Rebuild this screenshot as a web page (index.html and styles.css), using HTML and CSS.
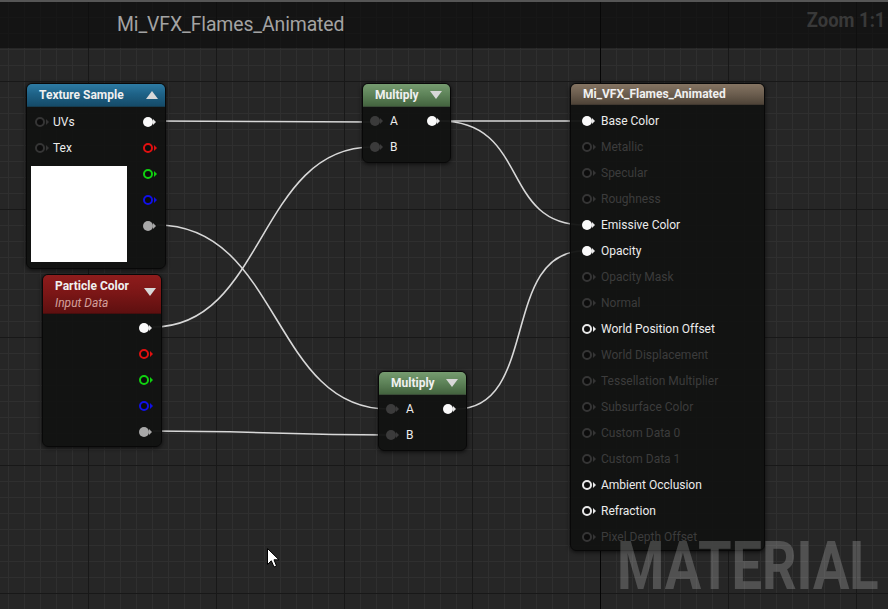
FILE: index.html
```html
<!DOCTYPE html>
<html>
<head>
<meta charset="utf-8">
<link rel="stylesheet" href="styles.css">
</head>
<body>
<div class="graph">
  <header class="topbar">
    <span class="title">Mi_VFX_Flames_Animated</span>
    <span class="zoom">Zoom 1:1</span>
  </header>

  <svg class="wires" width="888" height="609" viewBox="0 0 888 609">
    <g fill="none" stroke="#d8d8d8" stroke-width="1.6">
      <path d="M157,121 C260,121 268,122 372,122"/>
      <path d="M157,225 C280,225 272,409 388,409"/>
      <path d="M153,327 C265,327 258,147 372,147"/>
      <path d="M153,431 C265,431 280,435 388,435"/>
      <path d="M440,121 C510,121 512,121 584,121"/>
      <path d="M440,121 C530,121 500,225 584,225"/>
      <path d="M456,409 C540,409 500,251 584,251"/>
    </g>
  </svg>

  <div class="node tex">
    <div class="head head-blue"><span class="htitle">Texture Sample</span><span class="tri up"></span></div>
    <div class="tex-body">
      <div class="tex-left">
        <div class="row in"><span class="pin dimring"></span><span class="lbl">UVs</span></div>
        <div class="row in"><span class="pin dimring"></span><span class="lbl">Tex</span></div>
        <div class="preview"></div>
      </div>
      <div class="tex-right">
        <div class="row out"><span class="pin white"></span></div>
        <div class="row out"><span class="pin ring red"></span></div>
        <div class="row out"><span class="pin ring green"></span></div>
        <div class="row out"><span class="pin ring blue"></span></div>
        <div class="row out"><span class="pin grey"></span></div>
      </div>
    </div>
  </div>

  <div class="node pcolor">
    <div class="head head-red">
      <div class="htext">
        <span class="htitle">Particle Color</span>
        <span class="hsub">Input Data</span>
      </div>
      <span class="tri down"></span>
    </div>
    <div class="pc-body">
      <div class="row out"><span class="pin white"></span></div>
      <div class="row out"><span class="pin ring red"></span></div>
      <div class="row out"><span class="pin ring green"></span></div>
      <div class="row out"><span class="pin ring blue"></span></div>
      <div class="row out"><span class="pin grey"></span></div>
    </div>
  </div>

  <div class="node mul mul1">
    <div class="head head-green"><span class="htitle">Multiply</span><span class="tri down"></span></div>
    <div class="mul-body">
      <div class="mul-left">
        <div class="row in"><span class="pin dimfill"></span><span class="lbl">A</span></div>
        <div class="row in"><span class="pin dimfill"></span><span class="lbl">B</span></div>
      </div>
      <div class="mul-right">
        <div class="row out"><span class="pin white"></span></div>
      </div>
    </div>
  </div>

  <div class="node mul mul2">
    <div class="head head-green"><span class="htitle">Multiply</span><span class="tri down"></span></div>
    <div class="mul-body">
      <div class="mul-left">
        <div class="row in"><span class="pin dimfill"></span><span class="lbl">A</span></div>
        <div class="row in"><span class="pin dimfill"></span><span class="lbl">B</span></div>
      </div>
      <div class="mul-right">
        <div class="row out"><span class="pin white"></span></div>
      </div>
    </div>
  </div>

  <div class="node mat">
    <div class="head head-brown"><span class="htitle">Mi_VFX_Flames_Animated</span></div>
    <div class="mat-body">
      <div class="row in"><span class="pin white"></span><span class="lbl">Base Color</span></div>
      <div class="row in off"><span class="pin dimring"></span><span class="lbl">Metallic</span></div>
      <div class="row in off"><span class="pin dimring"></span><span class="lbl">Specular</span></div>
      <div class="row in off"><span class="pin dimring"></span><span class="lbl">Roughness</span></div>
      <div class="row in"><span class="pin white"></span><span class="lbl">Emissive Color</span></div>
      <div class="row in"><span class="pin white"></span><span class="lbl">Opacity</span></div>
      <div class="row in off"><span class="pin dimring"></span><span class="lbl">Opacity Mask</span></div>
      <div class="row in off"><span class="pin dimring"></span><span class="lbl">Normal</span></div>
      <div class="row in"><span class="pin ring whitering"></span><span class="lbl">World Position Offset</span></div>
      <div class="row in off"><span class="pin dimring"></span><span class="lbl">World Displacement</span></div>
      <div class="row in off"><span class="pin dimring"></span><span class="lbl">Tessellation Multiplier</span></div>
      <div class="row in off"><span class="pin dimring"></span><span class="lbl">Subsurface Color</span></div>
      <div class="row in off"><span class="pin dimring"></span><span class="lbl">Custom Data 0</span></div>
      <div class="row in off"><span class="pin dimring"></span><span class="lbl">Custom Data 1</span></div>
      <div class="row in"><span class="pin ring whitering"></span><span class="lbl">Ambient Occlusion</span></div>
      <div class="row in"><span class="pin ring whitering"></span><span class="lbl">Refraction</span></div>
      <div class="row in off"><span class="pin dimring"></span><span class="lbl">Pixel Depth Offset</span></div>
    </div>
  </div>

  <div class="watermark">MATERIAL</div>

  <svg class="cursor" width="14" height="22" viewBox="0 0 14 22">
    <path d="M0.5,0.5 L0.5,16.5 L4.3,12.8 L7,19 L9.5,18 L7,11.8 L12,11.8 Z" fill="#fff" stroke="#000" stroke-width="1"/>
  </svg>
</div>
</body>
</html>
```

FILE: styles.css
```css
* { box-sizing: border-box; }
html, body { margin: 0; padding: 0; }
body {
  width: 888px;
  height: 609px;
  overflow: hidden;
  font-family: Roboto, "Noto Sans", sans-serif;
  background: #262626;
}
.graph {
  position: relative;
  width: 888px;
  height: 609px;
  overflow: hidden;
  background-color: #262626;
  background-image:
    linear-gradient(to right, transparent 600px, #050505 600px, #050505 601px, transparent 601px),
    linear-gradient(to right, #181818 1px, transparent 1px),
    linear-gradient(to bottom, #181818 1px, transparent 1px),
    linear-gradient(to right, #2f2f2f 1px, transparent 1px),
    linear-gradient(to bottom, #2f2f2f 1px, transparent 1px);
  background-size: 888px 609px, 128px 128px, 128px 128px, 16px 16px, 16px 16px;
  background-position: 0 0, 88px 0, 0 81px, 8px 0, 0 1px;
  background-repeat: no-repeat, repeat, repeat, repeat, repeat;
}
.topbar {
  height: 48px;
  border-top: 2px solid #565656;
  background: rgba(10, 10, 10, 0.62);
  display: flex;
  align-items: center;
  justify-content: space-between;
  padding: 0 0 2px 117px;
  position: relative;
  z-index: 3;
}
.title {
  font-size: 19.4px;
  color: #a3a3a3;
  letter-spacing: -0.1px;
}
.zoom {
  font-size: 20px;
  font-weight: bold;
  color: #393939;
  margin-right: 3px;
  margin-top: -8px;
  transform: scaleX(0.92);
  transform-origin: right center;
}
.wires {
  position: absolute;
  left: 0;
  top: 0;
  z-index: 1;
}
.node {
  position: absolute;
  z-index: 2;
  background: rgba(18, 19, 18, 0.96);
  border: 1px solid #080808;
  border-radius: 6px;
  box-shadow: 0 1px 4px rgba(0, 0, 0, 0.7);
  overflow: hidden;
  color: #ececec;
  font-size: 12px;
}
.head {
  display: flex;
  align-items: center;
  justify-content: space-between;
  height: 23px;
  padding: 0 7px 0 12px;
  border-bottom: 1px solid rgba(0,0,0,0.5);
}
.htitle {
  font-weight: bold;
  font-size: 12px;
  color: #f0f0f0;
  white-space: nowrap;
}
.head-blue { background: linear-gradient(to bottom, #2d7ba3 0%, #1e6287 45%, #154b69 100%); }
.head-red { background: linear-gradient(to bottom, #8e1c1c 0%, #7a1616 50%, #5e1010 100%); height: 39px; align-items: flex-start; padding-top: 3px; }
.head-green { background: linear-gradient(to bottom, #769c70 0%, #5d8258 50%, #44643f 100%); }
.head-brown { background: linear-gradient(to bottom, #857462 0%, #6c5e4f 50%, #4f4438 100%); height: 21px; }
.htext { display: flex; flex-direction: column; line-height: 17px; }
.hsub { font-style: italic; color: #d4a09c; font-size: 12px; }
.tri { width: 0; height: 0; border-left: 6px solid transparent; border-right: 6px solid transparent; }
.tri.up { border-bottom: 8px solid #d8d8d8; }
.tri.down { border-top: 8px solid #d8d8d8; }
.head-red .tri { margin-top: 10px; }

.row {
  height: 26px;
  display: flex;
  align-items: center;
  white-space: nowrap;
}
.row.out { justify-content: flex-end; }
.lbl { color: #ececec; font-size: 12px; }
.off .lbl { color: #3c3c3c; }

/* pins */
.pin {
  position: relative;
  width: 10px;
  height: 10px;
  border-radius: 50%;
  flex: none;
}
.pin::after {
  content: "";
  position: absolute;
  top: 50%;
  margin-top: -3px;
  left: 10px;
  border-top: 3px solid transparent;
  border-bottom: 3px solid transparent;
  border-left: 3px solid #bdbdbd;
}
.pin.white { background: #fafafa; }
.pin.white::after { border-left-color: #e8e8e8; }
.pin.grey { background: #a8a8a8; }
.pin.grey::after { border-left-color: #a8a8a8; }
.pin.ring { border: 2px solid; background: #0c0c0c; }
.pin.ring::after { left: 9px; }
.pin.red { border-color: #e01010; }
.pin.red::after { border-left-color: #e01010; }
.pin.green { border-color: #10d010; }
.pin.green::after { border-left-color: #10d010; }
.pin.blue { border-color: #1010e8; }
.pin.blue::after { border-left-color: #1010e8; }
.pin.whitering { border-color: #e8e8e8; }
.pin.whitering::after { border-left-color: #e8e8e8; }
.pin.dimring { border: 2px solid #353535; background: #0c0c0c; }
.pin.dimring::after { left: 9px; border-left-color: #353535; }
.pin.dimfill { background: #3b3b3b; }
.pin.dimfill::after { border-left-color: #3b3b3b; }

/* texture sample */
.tex { left: 26px; top: 83px; width: 140px; height: 186px; }
.tex-body { display: flex; justify-content: space-between; padding-top: 2px; }
.tex-left { display: flex; flex-direction: column; }
.tex-left .row { padding-left: 8px; }
.tex-left .lbl { margin-left: 8px; }
.preview { width: 96px; height: 96px; background: #fff; margin: 5px 0 0 4px; }
.tex-right { display: flex; flex-direction: column; padding-right: 12px; }

/* particle color */
.pcolor { left: 42px; top: 274px; width: 120px; height: 173px; }
.pcolor .head { padding-left: 12px; padding-right: 5px; }
.pc-body { display: flex; flex-direction: column; padding: 1px 12px 0 0; }

/* multiply */
.mul { width: 89px; height: 80px; }
.mul1 { left: 362px; top: 83px; }
.mul2 { left: 378px; top: 371px; }
.mul .head { padding-left: 12px; padding-right: 8px; }
.mul-body { display: flex; justify-content: space-between; padding-top: 1px; }
.mul-left { display: flex; flex-direction: column; padding-left: 7px; }
.mul-left .lbl { margin-left: 10px; }
.mul-right { padding-right: 13px; }

/* material */
.mat { left: 570px; top: 83px; width: 195px; height: 468px; }
.mat .head { padding-left: 12px; }
.mat-body { display: flex; flex-direction: column; padding: 3px 0 0 11px; }
.mat-body .lbl { margin-left: 9px; }

.watermark {
  position: absolute;
  left: 617px;
  top: 527px;
  z-index: 4;
  font-family: Roboto, "Liberation Sans", sans-serif;
  font-weight: bold;
  font-size: 66px;
  line-height: 80px;
  color: rgba(255, 255, 255, 0.2);
  transform: scaleX(0.82);
  transform-origin: left top;
  letter-spacing: 0px;
}
.cursor {
  position: absolute;
  left: 267px;
  top: 548px;
  z-index: 5;
}
```
